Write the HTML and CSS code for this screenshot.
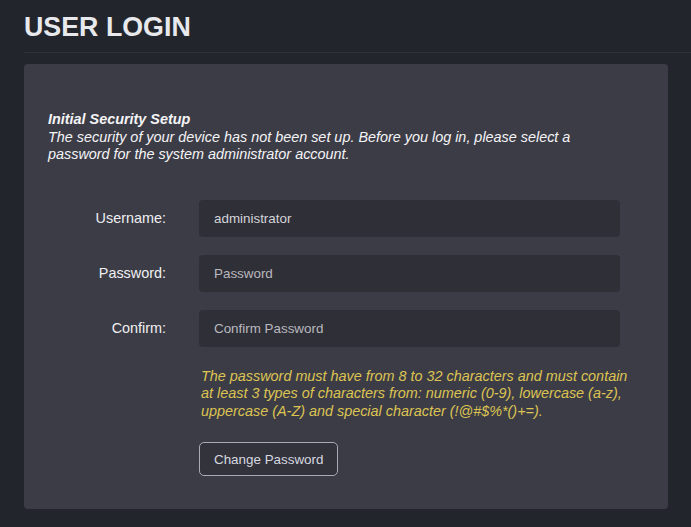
FILE: index.html
```html
<!DOCTYPE html>
<html lang="en">
<head>
<meta charset="utf-8">
<title>User Login</title>
<link rel="stylesheet" href="styles.css">
</head>
<body>
<header class="page-header">
  <h1 class="page-title">USER LOGIN</h1>
</header>
<main class="panel">
  <div class="intro">
    <div class="intro-title">Initial Security Setup</div>
    <div class="intro-text">The security of your device has not been set up. Before you log in, please select a password for the system administrator account.</div>
  </div>
  <form class="form">
    <label class="label" for="user">Username:</label>
    <input class="field" id="user" type="text" value="administrator">
    <label class="label" for="pass">Password:</label>
    <input class="field" id="pass" type="password" placeholder="Password">
    <label class="label" for="confirm">Confirm:</label>
    <input class="field" id="confirm" type="password" placeholder="Confirm Password">
    <div class="actions">
      <p class="hint">The password must have from 8 to 32 characters and must contain at least 3 types of characters from: numeric (0-9), lowercase (a-z), uppercase (A-Z) and special character (!@#$%*()+=).</p>
      <button class="btn" type="button">Change Password</button>
    </div>
  </form>
</main>
</body>
</html>
```
FILE: styles.css
```css
html, body {
  margin: 0;
  padding: 0;
  background: #23252d;
  font-family: "Liberation Sans", Arial, sans-serif;
  color: #ececef;
}

.page-header {
  margin-left: 24px;
  padding: 12px 0 10px;
  border-bottom: 1px solid #2f3139;
}

.page-title {
  margin: 0;
  font-size: 26.8px;
  line-height: 30px;
  font-weight: bold;
  color: #e8e9ec;
}

.panel {
  margin: 11px 0 0 24px;
  width: 644px;
  box-sizing: border-box;
  background: #3c3c46;
  border-radius: 4px;
  padding: 47px 48px 33px 24px;
}

.intro {
  font-size: 14.4px;
  line-height: 17.5px;
  font-style: italic;
  color: #f4f4f6;
}

.intro-title {
  font-weight: bold;
}

.intro-text {
  padding-right: 20px;
}

.form {
  margin-top: 36px;
  display: grid;
  grid-template-columns: 118px 421px;
  column-gap: 33px;
  row-gap: 18px;
  align-items: center;
}

.label {
  text-align: right;
  font-size: 14.4px;
  color: #f0f0f2;
}

.field {
  height: 37px;
  box-sizing: border-box;
  border: none;
  border-radius: 4px;
  background: #2f2f38;
  padding: 0 15px;
  font-family: "Liberation Sans", Arial, sans-serif;
  font-size: 13.4px;
  color: #d4d4d8;
  outline: none;
}

.field::placeholder {
  color: #b9b9be;
}

.actions {
  grid-column: 2;
  margin-top: 3px;
}

.hint {
  margin: 0 -12px 22px 2px;
  font-size: 14.4px;
  line-height: 17.5px;
  font-style: italic;
  color: #dcc452;
}

.btn {
  display: block;
  height: 34px;
  padding: 0 14px;
  background: #33333c;
  border: 1px solid #a9aab3;
  border-radius: 5px;
  color: #d8d9e0;
  font-family: "Liberation Sans", Arial, sans-serif;
  font-size: 13.4px;
}
```
